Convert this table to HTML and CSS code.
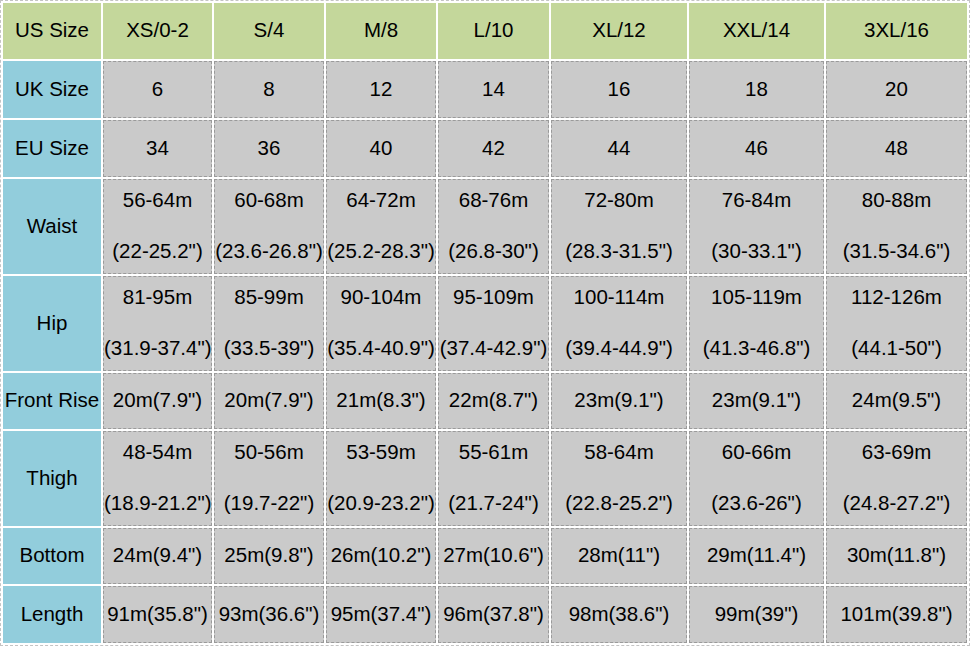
FILE: index.html
```html
<!DOCTYPE html>
<html>
<head>
<meta charset="utf-8">
<link rel="stylesheet" href="styles.css">
</head>
<body>
<table class="chart">
  <colgroup>
    <col class="c0"><col class="c1"><col class="c2"><col class="c3"><col class="c4"><col class="c5"><col class="c6"><col class="c7">
  </colgroup>
  <tr class="h56">
    <td class="hd">US Size</td><td class="hd">XS/0-2</td><td class="hd">S/4</td><td class="hd">M/8</td><td class="hd">L/10</td><td class="hd">XL/12</td><td class="hd">XXL/14</td><td class="hd">3XL/16</td>
  </tr>
  <tr class="h57">
    <td class="lb">UK Size</td><td>6</td><td>8</td><td>12</td><td>14</td><td>16</td><td>18</td><td>20</td>
  </tr>
  <tr class="h57">
    <td class="lb">EU Size</td><td>34</td><td>36</td><td>40</td><td>42</td><td>44</td><td>46</td><td>48</td>
  </tr>
  <tr class="h95">
    <td class="lb">Waist</td>
    <td><span class="l">56-64m</span><span class="l l2">(22-25.2")</span></td>
    <td><span class="l">60-68m</span><span class="l l2">(23.6-26.8")</span></td>
    <td><span class="l">64-72m</span><span class="l l2">(25.2-28.3")</span></td>
    <td><span class="l">68-76m</span><span class="l l2">(26.8-30")</span></td>
    <td><span class="l">72-80m</span><span class="l l2">(28.3-31.5")</span></td>
    <td><span class="l">76-84m</span><span class="l l2">(30-33.1")</span></td>
    <td><span class="l">80-88m</span><span class="l l2">(31.5-34.6")</span></td>
  </tr>
  <tr class="h95">
    <td class="lb">Hip</td>
    <td><span class="l">81-95m</span><span class="l l2">(31.9-37.4")</span></td>
    <td><span class="l">85-99m</span><span class="l l2">(33.5-39")</span></td>
    <td><span class="l">90-104m</span><span class="l l2">(35.4-40.9")</span></td>
    <td><span class="l">95-109m</span><span class="l l2">(37.4-42.9")</span></td>
    <td><span class="l">100-114m</span><span class="l l2">(39.4-44.9")</span></td>
    <td><span class="l">105-119m</span><span class="l l2">(41.3-46.8")</span></td>
    <td><span class="l">112-126m</span><span class="l l2">(44.1-50")</span></td>
  </tr>
  <tr class="h56">
    <td class="lb">Front Rise</td><td>20m(7.9")</td><td>20m(7.9")</td><td>21m(8.3")</td><td>22m(8.7")</td><td>23m(9.1")</td><td>23m(9.1")</td><td>24m(9.5")</td>
  </tr>
  <tr class="h95">
    <td class="lb">Thigh</td>
    <td><span class="l">48-54m</span><span class="l l2">(18.9-21.2")</span></td>
    <td><span class="l">50-56m</span><span class="l l2">(19.7-22")</span></td>
    <td><span class="l">53-59m</span><span class="l l2">(20.9-23.2")</span></td>
    <td><span class="l">55-61m</span><span class="l l2">(21.7-24")</span></td>
    <td><span class="l">58-64m</span><span class="l l2">(22.8-25.2")</span></td>
    <td><span class="l">60-66m</span><span class="l l2">(23.6-26")</span></td>
    <td><span class="l">63-69m</span><span class="l l2">(24.8-27.2")</span></td>
  </tr>
  <tr class="h56">
    <td class="lb">Bottom</td><td>24m(9.4")</td><td>25m(9.8")</td><td>26m(10.2")</td><td>27m(10.6")</td><td>28m(11")</td><td>29m(11.4")</td><td>30m(11.8")</td>
  </tr>
  <tr class="h57">
    <td class="lb">Length</td><td>91m(35.8")</td><td>93m(36.6")</td><td>95m(37.4")</td><td>96m(37.8")</td><td>98m(38.6")</td><td>99m(39")</td><td>101m(39.8")</td>
  </tr>
</table>
</body>
</html>
```
FILE: styles.css
```css
html, body {
  margin: 0;
  padding: 0;
  background: #ffffff;
}

.chart {
  width: 970px;
  table-layout: fixed;
  border-collapse: separate;
  border-spacing: 2px;
  border: 1px dashed #c4c4c4;
  font-family: "Liberation Sans", Arial, sans-serif;
  font-size: 20.5px;
  color: #000;
}

.c0 { width: 98px; }
.c1 { width: 109px; }
.c2 { width: 110px; }
.c3 { width: 110px; }
.c4 { width: 111px; }
.c5 { width: 136px; }
.c6 { width: 135px; }
.c7 { width: 141px; }

.h56 { height: 56px; }
.h57 { height: 57px; }
.h95 { height: 95px; }

.chart td {
  padding: 0 0 2px 0;
  text-align: center;
  vertical-align: middle;
  white-space: nowrap;
  background: #cacaca;
  border: 1px dashed #9a9a9a;
  line-height: 24px;
}

.chart td.hd {
  background: #c4d79b;
  border: 1px solid #c4d79b;
}

.chart td.lb {
  background: #92cddc;
  border: 1px solid #92cddc;
}

.l {
  display: block;
}

.l2 {
  margin-top: 27px;
}
```
